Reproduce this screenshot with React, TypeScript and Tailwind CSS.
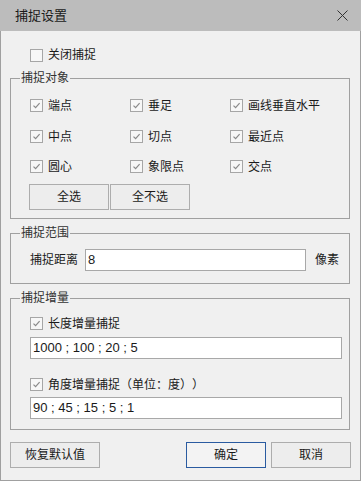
import React from "react";

const font = { fontFamily: '"Liberation Sans", "Noto Sans CJK SC", sans-serif' };

function Check({ checked, label }: { checked: boolean; label: string }) {
  return (
    <div className="flex items-center h-[13px]">
      <div className="w-[13px] h-[13px] border border-[#a6a6a6] bg-[#f7f7f7] flex items-center justify-center shrink-0">
        {checked && (
          <svg width="9" height="9" viewBox="0 0 9 9">
            <path d="M1.5 4.6 L3.6 6.7 L7.6 2.2" fill="none" stroke="#8a8a8a" strokeWidth="1.2" />
          </svg>
        )}
      </div>
      <span className="ml-[5px] text-[12px] leading-[14px] text-[#1a1a1a] whitespace-nowrap [text-spacing-trim:space-all]">{label}</span>
    </div>
  );
}

function Group({ title, children, className }: { title: string; children: React.ReactNode; className?: string }) {
  return (
    <div className={"relative border border-[#a0a0a0] " + (className ?? "")}>
      <span className="absolute left-[9px] top-[-8px] bg-[#f0f0f0] px-[1px] text-[12px] leading-[14px] text-[#333]">
        {title}
      </span>
      {children}
    </div>
  );
}

function Btn({ label, w, primary }: { label: string; w: string; primary?: boolean }) {
  return (
    <div
      className={
        "h-[26px] flex items-center justify-center text-[12px] text-[#1a1a1a] bg-[#ededed] border " +
        (primary ? "border-[#2a5ba0] bg-[#f3f3f3] " : "border-[#adadad] ") +
        w
      }
    >
      {label}
    </div>
  );
}

export default function App() {
  const rows = [
    ["端点", "垂足", "画线垂直水平"],
    ["中点", "切点", "最近点"],
    ["圆心", "象限点", "交点"],
  ];
  const rowMt = ["mt-[20px]", "mt-[18px]", "mt-[17px]"];
  return (
    <div className="w-[361px] h-[481px] flex flex-col bg-[#f0f0f0]" style={font}>
      <div className="h-[31px] shrink-0 bg-[#bcbcbc] flex items-center justify-between pl-[15px] pr-[13px]">
        <span className="text-[13px] text-[#1a1a1a]">捕捉设置</span>
        <svg width="11" height="11" viewBox="0 0 11 11">
          <path d="M0.5 0.5 L10.5 10.5 M10.5 0.5 L0.5 10.5" stroke="#333" strokeWidth="1" />
        </svg>
      </div>
      <div className="flex-1 flex flex-col border-l border-r border-b border-[#a0a0a0] pl-[9px] pr-[9px] pt-[17px]">
        <div className="pl-[20px] h-[14px] flex items-center">
          <Check checked={false} label="关闭捕捉" />
        </div>
        <Group title="捕捉对象" className="mt-[16px] h-[141px] w-[340px] pl-[19px]">
          {rows.map((r, i) => (
            <div key={i} className={"flex " + rowMt[i]}>
              {r.map((l) => (
                <div key={l} className="w-[100px]">
                  <Check checked label={l} />
                </div>
              ))}
            </div>
          ))}
          <div className="flex gap-[1px] mt-[11px] ml-[-1px]">
            <Btn label="全选" w="w-[80px]" />
            <Btn label="全不选" w="w-[80px]" />
          </div>
        </Group>
        <Group title="捕捉范围" className="mt-[14px] h-[51px] w-[340px] pl-[19px] pt-[15px]">
          <div className="flex items-center">
            <span className="text-[12px] text-[#1a1a1a] w-[48px]">捕捉距离</span>
            <div className="ml-[7px] w-[221px] h-[22px] border border-[#a8a8a8] bg-white flex items-center pl-[2px] text-[13px] text-[#1a1a1a]">
              8
            </div>
            <span className="ml-[9px] text-[12px] text-[#1a1a1a]">像素</span>
          </div>
        </Group>
        <Group title="捕捉增量" className="mt-[14px] h-[132px] w-[340px] pl-[19px] pt-[18px]">
          <Check checked label="长度增量捕捉" />
          <div className="mt-[7px] w-[312px] h-[22px] border border-[#a8a8a8] bg-white flex items-center pl-[2px] text-[13px] text-[#1a1a1a]">
            1000 ; 100 ; 20 ; 5
          </div>
          <div className="mt-[19px]">
            <Check checked label="角度增量捕捉（单位：度））" />
          </div>
          <div className="mt-[6px] w-[312px] h-[22px] border border-[#a8a8a8] bg-white flex items-center pl-[2px] text-[13px] text-[#1a1a1a]">
            90 ; 45 ; 15 ; 5 ; 1
          </div>
        </Group>
        <div className="mt-[12px] flex">
          <Btn label="恢复默认值" w="w-[90px]" />
          <div className="flex-1" />
          <Btn label="确定" w="w-[80px]" primary />
          <div className="w-[5px]" />
          <Btn label="取消" w="w-[80px]" />
        </div>
      </div>
    </div>
  );
}
